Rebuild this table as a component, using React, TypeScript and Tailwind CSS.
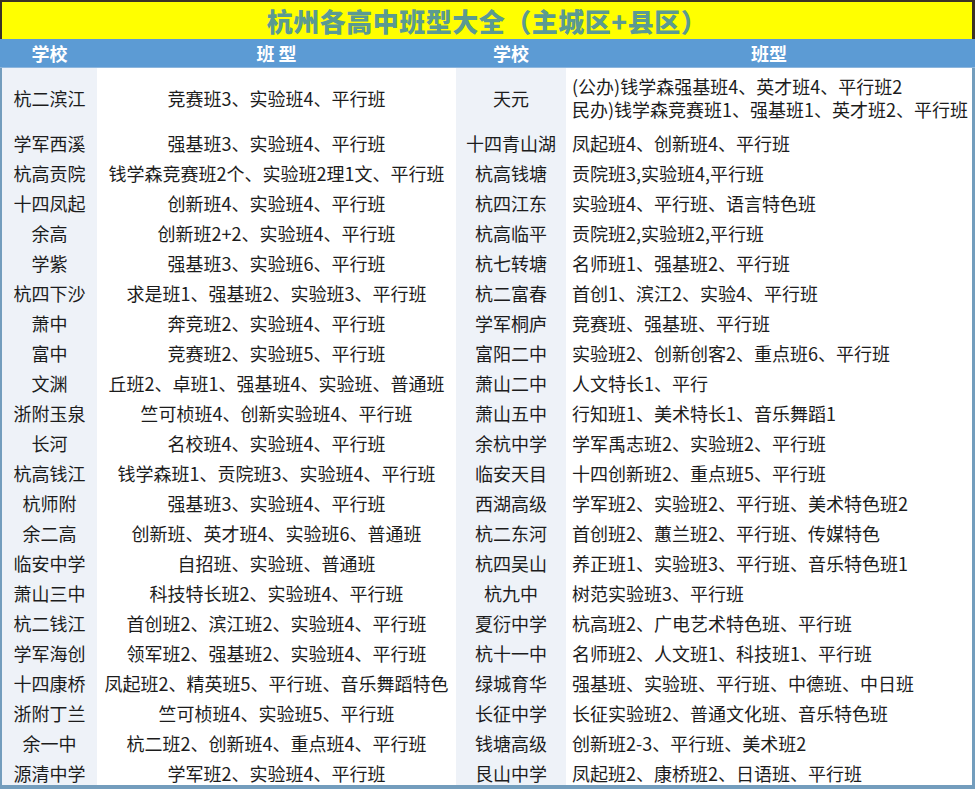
import React from 'react';

type Row = {
  school: string;
  classes: string;
  school2: string;
  classes2: string[];
};

const ROWS: Row[] = [
  {
    school: '杭二滨江',
    classes: '竞赛班3、实验班4、平行班',
    school2: '天元',
    classes2: ['(公办)钱学森强基班4、英才班4、平行班2', '民办)钱学森竞赛班1、强基班1、英才班2、平行班'],
  },
  { school: '学军西溪', classes: '强基班3、实验班4、平行班', school2: '十四青山湖', classes2: ['凤起班4、创新班4、平行班'] },
  { school: '杭高贡院', classes: '钱学森竞赛班2个、实验班2理1文、平行班', school2: '杭高钱塘', classes2: ['贡院班3,实验班4,平行班'] },
  { school: '十四凤起', classes: '创新班4、实验班4、平行班', school2: '杭四江东', classes2: ['实验班4、平行班、语言特色班'] },
  { school: '余高', classes: '创新班2+2、实验班4、平行班', school2: '杭高临平', classes2: ['贡院班2,实验班2,平行班'] },
  { school: '学紫', classes: '强基班3、实验班6、平行班', school2: '杭七转塘', classes2: ['名师班1、强基班2、平行班'] },
  { school: '杭四下沙', classes: '求是班1、强基班2、实验班3、平行班', school2: '杭二富春', classes2: ['首创1、滨江2、实验4、平行班'] },
  { school: '萧中', classes: '奔竞班2、实验班4、平行班', school2: '学军桐庐', classes2: ['竞赛班、强基班、平行班'] },
  { school: '富中', classes: '竞赛班2、实验班5、平行班', school2: '富阳二中', classes2: ['实验班2、创新创客2、重点班6、平行班'] },
  { school: '文渊', classes: '丘班2、卓班1、强基班4、实验班、普通班', school2: '萧山二中', classes2: ['人文特长1、平行'] },
  { school: '浙附玉泉', classes: '竺可桢班4、创新实验班4、平行班', school2: '萧山五中', classes2: ['行知班1、美术特长1、音乐舞蹈1'] },
  { school: '长河', classes: '名校班4、实验班4、平行班', school2: '余杭中学', classes2: ['学军禹志班2、实验班2、平行班'] },
  { school: '杭高钱江', classes: '钱学森班1、贡院班3、实验班4、平行班', school2: '临安天目', classes2: ['十四创新班2、重点班5、平行班'] },
  { school: '杭师附', classes: '强基班3、实验班4、平行班', school2: '西湖高级', classes2: ['学军班2、实验班2、平行班、美术特色班2'] },
  { school: '余二高', classes: '创新班、英才班4、实验班6、普通班', school2: '杭二东河', classes2: ['首创班2、蕙兰班2、平行班、传媒特色'] },
  { school: '临安中学', classes: '自招班、实验班、普通班', school2: '杭四吴山', classes2: ['养正班1、实验班3、平行班、音乐特色班1'] },
  { school: '萧山三中', classes: '科技特长班2、实验班4、平行班', school2: '杭九中', classes2: ['树范实验班3、平行班'] },
  { school: '杭二钱江', classes: '首创班2、滨江班2、实验班4、平行班', school2: '夏衍中学', classes2: ['杭高班2、广电艺术特色班、平行班'] },
  { school: '学军海创', classes: '领军班2、强基班2、实验班4、平行班', school2: '杭十一中', classes2: ['名师班2、人文班1、科技班1、平行班'] },
  { school: '十四康桥', classes: '凤起班2、精英班5、平行班、音乐舞蹈特色', school2: '绿城育华', classes2: ['强基班、实验班、平行班、中德班、中日班'] },
  { school: '浙附丁兰', classes: '竺可桢班4、实验班5、平行班', school2: '长征中学', classes2: ['长征实验班2、普通文化班、音乐特色班'] },
  { school: '余一中', classes: '杭二班2、创新班4、重点班4、平行班', school2: '钱塘高级', classes2: ['创新班2-3、平行班、美术班2'] },
  { school: '源清中学', classes: '学军班2、实验班4、平行班', school2: '艮山中学', classes2: ['凤起班2、康桥班2、日语班、平行班'] },
];

const COLS = 'grid grid-cols-[95px_359px_110px_406px]';

export default function App() {
  return (
    <div
      className="w-[975px] h-[789px] flex flex-col overflow-hidden bg-white text-[#1c1c1c]"
      style={{ fontFamily: '"Noto Sans CJK SC", "Noto Sans", sans-serif' }}
    >
      {/* title */}
      <div className="h-[39px] shrink-0 bg-[#ffff00] border-t-2 border-l-2 border-r-[3px] border-[#3b3226] flex items-center justify-center">
        <h1 className="text-[26px] font-black text-[#5b9a92] tracking-[0.5px] leading-none">
          杭州各高中班型大全（主城区+县区）
        </h1>
      </div>

      {/* column headers */}
      <div className="h-[29px] shrink-0 bg-[#5c9bd4] border-b border-[#8db6dd] text-white font-bold text-[18px] leading-none">
        <div className={`${COLS} h-full pl-[2px] items-center`}>
          <div className="text-center">学校</div>
          <div className="text-center">班 型</div>
          <div className="text-center">学校</div>
          <div className="text-center">班型</div>
        </div>
      </div>

      {/* body */}
      <div className="flex-1 min-h-0 overflow-hidden border-l-2 border-r-[3px] border-b-4 border-[#739dbd] text-[18px] leading-[23px]">
        {ROWS.map((r, i) => (
          <div key={r.school} className={`${COLS} ${i === 0 ? 'h-[60px]' : 'h-[30px]'}`}>
            <div className="bg-[#eef2f8] flex items-center justify-center whitespace-nowrap">{r.school}</div>
            <div className="bg-white flex items-center justify-center whitespace-nowrap">{r.classes}</div>
            <div className="bg-[#eef2f8] flex items-center justify-center whitespace-nowrap">{r.school2}</div>
            <div className="bg-white flex flex-col justify-center pl-[6px] whitespace-nowrap overflow-hidden">
              {r.classes2.map((c) => (
                <div key={c}>{c}</div>
              ))}
            </div>
          </div>
        ))}
      </div>
    </div>
  );
}
